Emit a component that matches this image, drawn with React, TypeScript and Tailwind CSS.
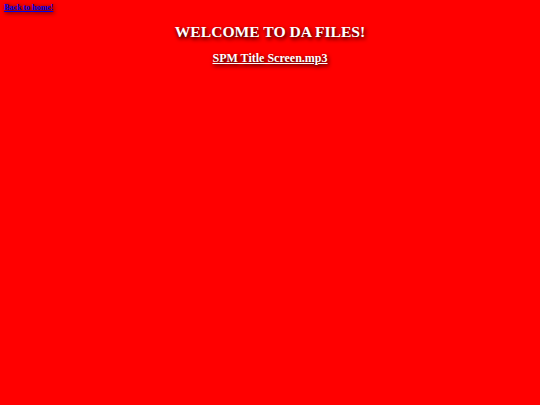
export default function App() {
  return (
    <div className="min-h-[405px] w-full bg-[#ff0000] font-['Liberation_Serif',serif]">
      <a
        href="#"
        className="block px-[4px] pt-[2px] text-[8px] font-bold leading-[11px] text-[#0000ee] underline [text-shadow:1px_1px_4px_#000]"
      >
        Back to home!
      </a>
      <div className="flex flex-col items-center pt-[9px] text-white">
        <h1 className="text-[15.6px] font-bold leading-[20px] [text-shadow:1px_2px_4px_#000]">
          WELCOME TO DA FILES!
        </h1>
        <a
          href="#"
          className="mt-[9px] text-[12px] font-bold leading-[15px] text-white underline [text-shadow:1px_2px_4px_#000]"
        >
          SPM Title Screen.mp3
        </a>
      </div>
    </div>
  );
}
